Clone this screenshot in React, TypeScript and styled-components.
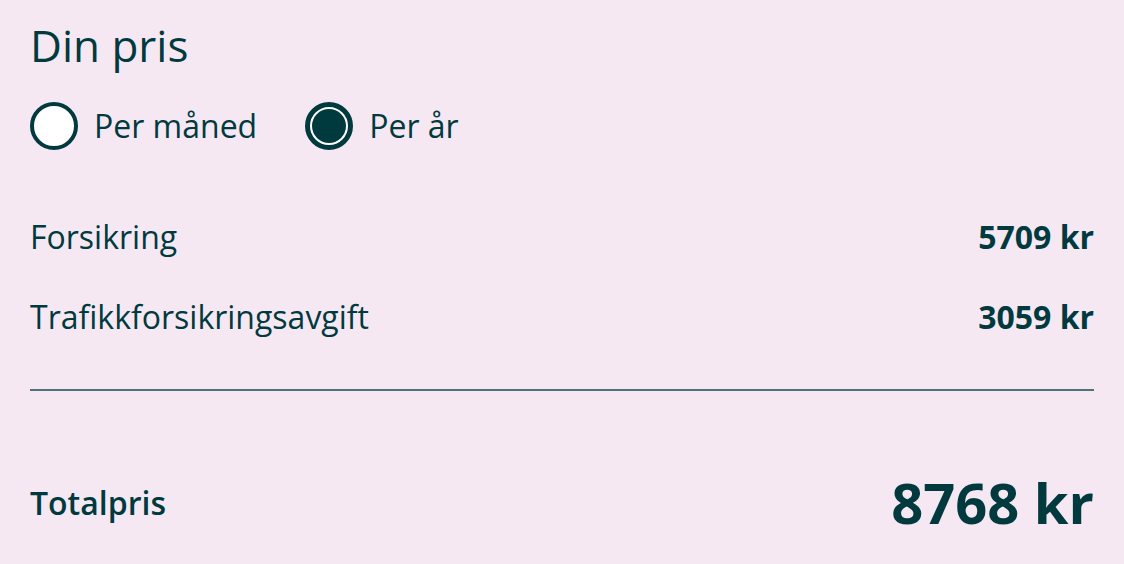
import styled, { createGlobalStyle } from 'styled-components'

const ink = '#003a3f'

const GlobalStyle = createGlobalStyle`
  html, body {
    margin: 0;
    padding: 0;
    background: #f6e8f2;
  }
  body {
    font-family: "Open Sans", "Noto Sans", sans-serif;
    color: ${ink};
  }
`

const Panel = styled.section`
  width: 1124px;
  height: 564px;
  box-sizing: border-box;
  padding: 16px 30px 0;
  background: #f6e8f2;
  display: flex;
  flex-direction: column;
`

const Title = styled.h2`
  margin: 0;
  font-size: 44px;
  font-weight: 400;
  line-height: 58px;
`

const RadioGroup = styled.div`
  display: flex;
  align-items: center;
  gap: 48px;
  margin-top: 28px;
`

const RadioLabel = styled.label`
  display: flex;
  align-items: center;
  gap: 16px;
  font-size: 32px;
  line-height: 48px;
  cursor: pointer;
`

const RadioCircle = styled.span<{ $checked?: boolean }>`
  width: 48px;
  height: 48px;
  box-sizing: border-box;
  border-radius: 50%;
  border: ${({ $checked }) => ($checked ? 5 : 4)}px solid ${ink};
  background: #fff;
  display: flex;
  align-items: center;
  justify-content: center;

  &::after {
    content: '';
    width: 34px;
    height: 34px;
    border-radius: 50%;
    background: ${({ $checked }) => ($checked ? ink : 'transparent')};
  }
`

const Lines = styled.div`
  display: flex;
  flex-direction: column;
  gap: 36px;
  margin-top: 65px;
`

const Row = styled.div`
  display: flex;
  justify-content: space-between;
  align-items: center;
  font-size: 32px;
  line-height: 44px;
`

const Amount = styled.span`
  font-weight: 700;
`

const Divider = styled.hr`
  margin: 50px 0 0;
  border: none;
  height: 2px;
  background: #4e7277;
`

const TotalRow = styled.div`
  display: flex;
  justify-content: space-between;
  align-items: center;
  margin-top: 76px;
`

const TotalLabel = styled.span`
  font-size: 32px;
  font-weight: 600;
`

const TotalAmount = styled.span`
  font-size: 56px;
  font-weight: 700;
  line-height: 70px;
`

export default function App() {
  return (
    <>
      <GlobalStyle />
      <Panel>
        <Title>Din pris</Title>
        <RadioGroup>
          <RadioLabel>
            <RadioCircle />
            Per måned
          </RadioLabel>
          <RadioLabel>
            <RadioCircle $checked />
            Per år
          </RadioLabel>
        </RadioGroup>
        <Lines>
          <Row>
            <span>Forsikring</span>
            <Amount>5709 kr</Amount>
          </Row>
          <Row>
            <span>Trafikkforsikringsavgift</span>
            <Amount>3059 kr</Amount>
          </Row>
        </Lines>
        <Divider />
        <TotalRow>
          <TotalLabel>Totalpris</TotalLabel>
          <TotalAmount>8768 kr</TotalAmount>
        </TotalRow>
      </Panel>
    </>
  )
}
